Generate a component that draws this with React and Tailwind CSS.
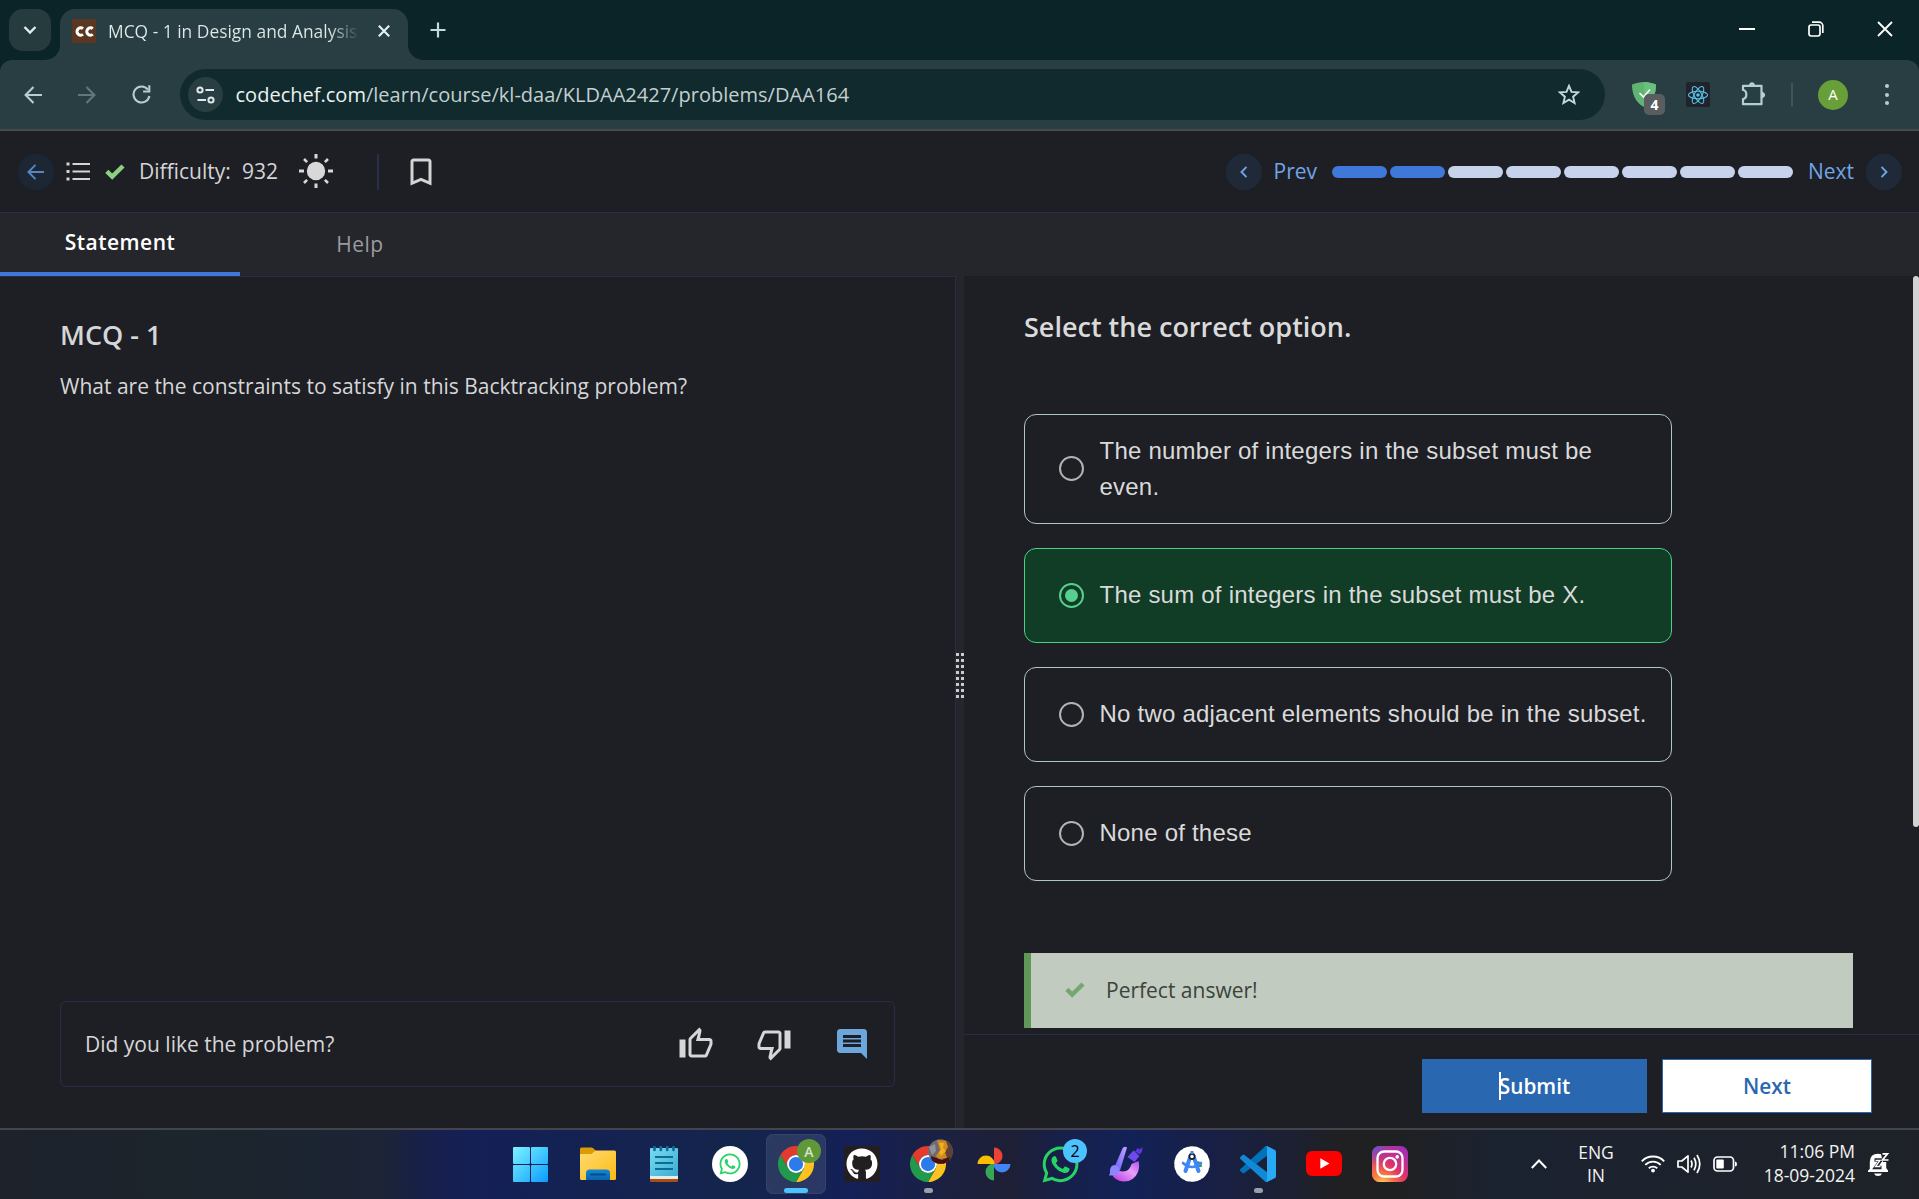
import { FaWhatsapp, FaGithub } from "react-icons/fa";

/* ---------- Browser chrome ---------- */

function TabCorner({ flip }) {
  return (
    <svg width="15" height="15" viewBox="0 0 15 15" className={flip ? "-scale-x-100" : ""}>
      <path d="M15 0A15 15 0 0 1 0 15H15Z" fill="#283e42" />
    </svg>
  );
}

function TitleBar() {
  return (
    <header className="flex h-[60px] items-end bg-[#0a2427]">
      <button className="mb-[9px] ml-[9px] flex size-[42px] items-center justify-center rounded-[14px] bg-[#253b3e]">
        <svg width="14" height="10" viewBox="0 0 14 10" fill="none" stroke="#e3ecec" strokeWidth="2.4">
          <path d="M1.5 2 7 7.5 12.5 2" />
        </svg>
      </button>
      <div className="ml-[-6px] flex items-end">
        <TabCorner />
        <div className="flex h-[51px] w-[348px] items-center rounded-t-[15px] bg-[#283e42] pb-[8px] pl-3">
          <span className="mt-px flex size-6 items-center justify-center bg-[#5b3722]">
            <svg width="20" height="11" viewBox="0 0 20 11" fill="none" stroke="#fff" strokeWidth="3">
              <path d="M9 2.6A3.7 3.7 0 1 0 9 8.4M18.8 2.6A3.7 3.7 0 1 0 18.8 8.4" />
            </svg>
          </span>
          <span className="ml-3 w-[252px] overflow-hidden whitespace-nowrap bg-linear-to-r from-[#e1eaea] from-88% to-[#283e42] bg-clip-text text-[17.4px] leading-6 text-transparent">
            MCQ - 1 in Design and Analysis
          </span>
          <svg className="ml-[18px]" width="12" height="12" viewBox="0 0 12 12" stroke="#e6eeee" strokeWidth="2.2">
            <path d="M.8.8 11.2 11.2M11.2.8.8 11.2" />
          </svg>
        </div>
        <TabCorner flip />
      </div>
      <svg className="mb-[22px] ml-[7px]" width="16" height="16" viewBox="0 0 16 16" stroke="#c3d9dc" strokeWidth="2.2">
        <path d="M8 .5v15M.5 8h15" />
      </svg>
      <div className="mb-[23px] ml-auto mr-[26px] flex items-center gap-[53px]">
        <svg width="16" height="16" viewBox="0 0 16 16">
          <path d="M0 8h16" stroke="#fff" strokeWidth="2" />
        </svg>
        <svg width="16" height="16" viewBox="0 0 16 16" fill="none" stroke="#fff" strokeWidth="1.7">
          <rect x="1" y="4" width="11" height="11" rx="2.2" />
          <path d="M4 1.2h7.2c2 0 3.6 1.6 3.6 3.6V12" />
        </svg>
        <svg width="16" height="16" viewBox="0 0 16 16" stroke="#fff" strokeWidth="1.8">
          <path d="M1 1l14 14M15 1 1 15" />
        </svg>
      </div>
    </header>
  );
}

function ArrowIcon({ flip, color }) {
  return (
    <svg className={flip ? "rotate-180" : ""} width="18" height="18" viewBox="0 0 18 18" fill="none" stroke={color} strokeWidth="2.1">
      <path d="M9.5 1 1.6 9l7.900 8M1.600 9H18" />
    </svg>
  );
}

function ReactGlyph() {
  return (
    <span className="flex h-[25px] w-6 items-center justify-center rounded-[2px] bg-[#20232a]">
      <svg width="22" height="22" viewBox="-11 -11 22 22" fill="none" stroke="#53c1e8" strokeWidth="1.1">
        <ellipse rx="9.6" ry="3.7" />
        <ellipse rx="9.6" ry="3.7" transform="rotate(60)" />
        <ellipse rx="9.6" ry="3.7" transform="rotate(120)" />
        <circle r="1.8" fill="#53c1e8" stroke="none" />
      </svg>
    </span>
  );
}

function AddressBar() {
  return (
    <div className="bg-[#0a2427]">
      <div className="flex h-[71px] items-center rounded-t-[12px] border-b-2 border-[#444a4d] bg-[#283e42] pl-6">
        <ArrowIcon color="#b4cfd3" />
        <span className="ml-9 flex">
          <ArrowIcon flip color="#61777a" />
        </span>
        <svg className="ml-9" width="19" height="19" viewBox="0 0 19 19" fill="none" stroke="#b4cfd3" strokeWidth="2.1">
          <path d="M15.9 4.6A8 8 0 1 0 17.4 11" />
          <path d="M17.3 .3v6.2h-6.2" />
        </svg>
        <div className="ml-[29px] flex h-[51px] w-[1425px] items-center rounded-full bg-[#112a2d] pl-2 pr-[25px]">
          <span className="flex size-[35px] items-center justify-center rounded-full bg-[#283e42]">
            <svg width="19" height="18" viewBox="0 0 19 18" fill="none" stroke="#dfe9ea" strokeWidth="2">
              <circle cx="4" cy="4" r="2.6" />
              <path d="M9.5 4H18M1.5 14H10" />
              <circle cx="15" cy="14" r="2.6" />
            </svg>
          </span>
          <span className="ml-[12.500px] whitespace-nowrap text-[20.04px] leading-8 text-[#c3cfd0]">
            <span className="text-[#eaf1f1]">codechef.com</span>/learn/course/kl-daa/KLDAA2427/problems/DAA164
          </span>
          <svg className="ml-auto" width="22" height="22" viewBox="0 0 22 22" fill="none" stroke="#c5d6d8" strokeWidth="1.9">
            <path d="m11 1.8 2.5 6.1 6.6.5-5 4.3 1.5 6.4L11 15.700l-5.600 3.400 1.500-6.400-5-4.300 6.600-.5z" />
          </svg>
        </div>
        <div className="relative ml-[27px] h-[25px] w-6">
          <svg width="24" height="25" viewBox="0 0 24 25">
            <path d="M12 0c4 0 8 1 12 2.500 0 10-3.500 18-12 22.500C3.500 20.500 0 12.500 0 2.500 4 1 8 0 12 0z" fill="#5fb471" />
            <path d="M12 0c4 0 8 1 12 2.500 0 10-3.500 18-12 22.500z" fill="#6abf7c" />
            <path d="m7.500 11 4 4L18 7.500" fill="none" stroke="#fff" strokeWidth="1.600" />
          </svg>
          <span className="absolute left-[12px] top-[12px] flex size-[21px] items-center justify-center rounded-[5px] bg-[#5a5d5f] text-[14px] font-bold leading-none text-white">
            4
          </span>
        </div>
        <span className="ml-[30px]">
          <ReactGlyph />
        </span>
        <svg className="mb-[3px] ml-[31px]" width="26" height="25" viewBox="0 0 26 25" fill="none" stroke="#b4cfd3" strokeWidth="2.2" strokeLinejoin="round">
          <path d="M2 9V4.800H20.500V23.200H2V18c4.400-.6 4.400-8.400 0-9z" />
          <path d="M8 4.500c0-4.500 6-4.500 6 0zM20.800 11c4.500 0 4.500 6 0 6z" fill="#b4cfd3" stroke="none" />
        </svg>
        <span className="ml-[24px] h-[23px] w-[2px] bg-[#3f5659]" />
        <span className="ml-[25px] flex size-[30px] items-center justify-center rounded-full bg-[#689f38] text-[15px] text-white">A</span>
        <span className="ml-[37px] flex flex-col gap-[4.500px]">
          <i className="size-1 rounded-full bg-[#b4cfd3]" />
          <i className="size-1 rounded-full bg-[#b4cfd3]" />
          <i className="size-1 rounded-full bg-[#b4cfd3]" />
        </span>
      </div>
    </div>
  );
}

/* ---------- Course page ---------- */

function Check({ color }) {
  return (
    <svg width="20" height="16" viewBox="0 0 20 16" fill="none" stroke={color} strokeWidth="4.400">
      <path d="M1.800 7.400 7.200 12.600 18 2" />
    </svg>
  );
}

function RoundNav({ next }) {
  return (
    <span className="flex size-9 items-center justify-center rounded-full bg-[#1f2937]">
      <svg width="8" height="12" viewBox="0 0 8 12" fill="none" stroke="#6fa5e8" strokeWidth="1.900" className={next ? "rotate-180" : ""}>
        <path d="M6.500.8 1.500 6l5 5.200" />
      </svg>
    </span>
  );
}

const steps = [true, true, false, false, false, false, false, false];

function ProblemHeader() {
  return (
    <div className="flex h-[82px] items-center border-b border-[#262e48] pl-[18px] pr-[17px] pt-px text-[#d4d4d4]">
      <span className="flex size-9 items-center justify-center rounded-full bg-[#1d2733]">
        <svg className="mr-px" width="17" height="16" viewBox="0 0 17 16" fill="none" stroke="#5587c2" strokeWidth="1.900">
          <path d="M8.500.8 1.400 8l7.100 7.200M1.400 8H17" />
        </svg>
      </span>
      <svg className="ml-3" width="24" height="20" viewBox="0 0 24 20" fill="none" stroke="#d4d4d4" strokeWidth="2">
        <path d="M6.500 2H24M6.500 9.500H24M6.500 17H24" />
        <path d="M.5 2h3M.5 9.500h3M.5 17h3" strokeWidth="3" />
      </svg>
      <span className="ml-[15px]">
        <Check color="#8ed081" />
      </span>
      <span className="ml-[14px] w-[103px] text-[21px]">Difficulty:</span>
      <span className="w-[37px] text-[21px]">932</span>
      <svg className="mb-[2px] ml-[20px]" width="34" height="34" viewBox="-17 -17 34 34" stroke="#d8d8d8" strokeWidth="3">
        <circle r="9.200" fill="#d8d8d8" stroke="none" />
        <path d="M0-17v4.500M0 17v-4.500M-17 0h5M17 0h-5" />
        <path d="M-12-12l3.100 3.100M12-12 8.900-8.900M-12 12l3.100-3.100M12 12 8.900 8.900" strokeWidth="2.600" />
      </svg>
      <span className="ml-[44px] h-9 w-[2px] bg-[#272f4a]" />
      <svg className="ml-[24px]" width="36" height="36" viewBox="0 0 24 24" fill="#d4d4d4">
        <path d="M17 3H7c-1.100 0-1.990.9-1.990 2L5 21l7-3 7 3V5c0-1.100-.9-2-2-2zm0 15-5-2.180L7 18V5h10v13z" />
      </svg>
      <div className="ml-auto flex items-center text-[21px] text-[#70a5e8]">
        <RoundNav />
        <span className="ml-[11.500px] w-[58.500px]">Prev</span>
        <div className="flex w-[461px] gap-[3px]">
          {steps.map((done, i) => (
            <span key={i} className={done ? "h-3 flex-1 rounded-full bg-[#4078da]" : "h-3 flex-1 rounded-full bg-[#c7d3eb]"} />
          ))}
        </div>
        <span className="ml-[15px] w-[58px]">Next</span>
        <RoundNav next />
      </div>
    </div>
  );
}

function StatementPanel() {
  return (
    <section className="flex w-[956px] flex-col">
      <nav className="flex h-16 border-b border-[#262e48] bg-[#25262b] text-[21px] tracking-[0.5px]">
        <span className="flex w-60 items-center justify-center border-b-4 border-[#4078da] font-semibold text-white">Statement</span>
        <span className="flex w-60 items-center justify-center text-[#9b9b9e]">Help</span>
      </nav>
      <div className="flex flex-1 flex-col border-r border-[#262e48] pb-[41px] pl-[60px] pr-[60px] pt-[40px] text-[#d6d6d8]">
        <h1 className="text-[27px] font-semibold leading-9">MCQ - 1</h1>
        <p className="mt-[17px] text-[21px] leading-8">What are the constraints to satisfy in this Backtracking problem?</p>
        <div className="mt-auto flex h-[86px] items-center rounded-[6px] border border-[#262e48] pl-6 pr-6">
          <span className="mt-[2px] text-[21px]">Did you like the problem?</span>
          <div className="ml-auto flex gap-[42px]">
            <svg width="36" height="36" viewBox="0 0 24 24" fill="#d6d6d8">
              <path d="M9 21h9c.83 0 1.540-.5 1.840-1.220l3.020-7.050c.09-.23.14-.47.14-.73v-2c0-1.100-.9-2-2-2h-6.310l.95-4.570.03-.32c0-.41-.17-.79-.44-1.060L14.170 1 7.580 7.590C7.220 7.950 7 8.450 7 9v10c0 1.100.9 2 2 2zM9 9l4.340-4.340L12 10h9v2l-3 7H9V9zM1 9h4v12H1z" />
            </svg>
            <svg width="36" height="36" viewBox="0 0 24 24" fill="#d6d6d8">
              <path d="M15 3H6c-.83 0-1.540.5-1.840 1.220l-3.020 7.050c-.09.23-.14.47-.14.73v2c0 1.100.9 2 2 2h6.310l-.95 4.570-.03.32c0 .41.17.79.44 1.060L9.830 23l6.590-6.590c.36-.36.58-.86.58-1.410V5c0-1.100-.9-2-2-2zm0 12-4.340 4.340L12 14H3v-2l3-7h9v10zm4-12h4v12h-4z" />
            </svg>
            <svg width="36" height="36" viewBox="0 0 24 24" fill="#6ca6dc">
              <path d="M21.990 4c0-1.100-.89-2-1.990-2H4c-1.100 0-2 .9-2 2v12c0 1.100.9 2 2 2h14l4 4-.01-18zM18 14H6v-2h12v2zm0-3H6V9h12v2zm0-3H6V6h12v2z" />
            </svg>
          </div>
        </div>
      </div>
    </section>
  );
}

function Splitter() {
  return (
    <div className="flex w-2 flex-col items-stretch bg-[#25262b] pt-[440px]">
      <div className="grid grid-cols-2 gap-x-[2px] gap-y-[3px]">
        {Array.from({ length: 16 }, (_, i) => (
          <i key={i} className="h-[3px] bg-[#cbcbcb]" />
        ))}
      </div>
    </div>
  );
}

function Option({ text, selected }) {
  return (
    <label
      className={
        selected
          ? "flex min-h-[95px] items-center rounded-[12px] border border-[#45d483] bg-[#113d27] pb-px pl-[33.500px] pr-5"
          : "flex min-h-[95px] items-center rounded-[12px] border border-[#b0c4cb] pb-[18px] pl-[33.500px] pr-5 pt-[17px]"
      }
    >
      <span
        className={
          selected
            ? "flex size-[25px] shrink-0 items-center justify-center rounded-full border-[2.500px] border-[#57d08f]"
            : "size-[25px] shrink-0 rounded-full border-[2.500px] border-[#b3b3b3]"
        }
      >
        {selected && <i className="size-[13px] rounded-full bg-[#57d08f]" />}
      </span>
      <span className="ml-4 font-['Liberation_Sans',Arial,sans-serif] text-[24px] leading-9 tracking-[0.22px] text-[#dadada]">{text}</span>
    </label>
  );
}

function AnswerPanel() {
  return (
    <section className="flex flex-1 flex-col">
      <div className="h-[63px] bg-[#25262b]" />
      <div className="flex h-[758px] justify-between overflow-hidden pl-[60px]">
        <div className="w-[829px]">
          <h2 className="pt-[33px] text-[27px] font-semibold leading-9 text-[#dadada]">Select the correct option.</h2>
          <div className="mt-[69px] flex w-[648px] flex-col gap-6">
            <div className="flex h-[110px] flex-col *:grow">
              <Option text="The number of integers in the subset must be even." />
            </div>
            <Option selected text="The sum of integers in the subset must be X." />
            <Option text="No two adjacent elements should be in the subset." />
            <Option text="None of these" />
          </div>
          <div className="mt-[72px] flex h-[75px] items-center border-l-[7px] border-[#5f9857] bg-[#c2cbbf] pl-[34px]">
            <span className="mb-[2px]">
              <Check color="#74a871" />
            </span>
            <span className="ml-[21px] text-[21px] text-[#3c423d]">Perfect answer!</span>
          </div>
        </div>
        <div className="h-[551px] w-[6px] rounded-[3px] bg-[#d3d3d3]" />
      </div>
      <div className="flex flex-1 justify-end gap-[15px] border-t border-[#262e48] pr-[47px] pt-6 text-[20.800px] font-semibold">
        <button className="relative flex h-[54px] w-[225px] items-center justify-center bg-[#2967b0] pt-[2px] text-white">
          Submit
          <i className="absolute left-[77px] top-[13px] h-7 w-[2px] bg-white" />
        </button>
        <button className="flex h-[54px] w-[210px] items-center justify-center border border-[#2967b0] bg-white pt-[2px] text-[#2967b0]">Next</button>
      </div>
    </section>
  );
}

/* ---------- Taskbar ---------- */

function ChromeIcon() {
  return (
    <svg width="36" height="36" viewBox="0 0 48 48">
      <path d="M3.220 12A24 24 0 0 1 44.780 12H24A12 12 0 0 0 13.610 30Z" fill="#e33b2e" />
      <path d="M44.780 12A24 24 0 0 1 24 48L34.390 30A12 12 0 0 0 24 12Z" fill="#fcc31e" />
      <path d="M3.220 12A24 24 0 0 0 24 48L34.390 30A12 12 0 0 1 13.610 30Z" fill="#219a4b" />
      <circle cx="24" cy="24" r="12" fill="#fff" />
      <circle cx="24" cy="24" r="9.500" fill="#2c7bea" />
    </svg>
  );
}

function WindowsIcon() {
  return (
    <svg width="35" height="35" viewBox="0 0 35 35">
      <defs>
        <linearGradient id="win" x1="0" y1="0" x2="35" y2="35" gradientUnits="userSpaceOnUse">
          <stop stopColor="#7df4ff" />
          <stop offset="1" stopColor="#0a9bff" />
        </linearGradient>
      </defs>
      <g fill="url(#win)">
        <rect width="17" height="17" rx="1" />
        <rect x="18" width="17" height="17" rx="1" />
        <rect y="18" width="17" height="17" rx="1" />
        <rect x="18" y="18" width="17" height="17" rx="1" />
      </g>
    </svg>
  );
}

function ExplorerIcon() {
  return (
    <svg width="36" height="34" viewBox="0 0 36 34">
      <defs>
        <linearGradient id="fold" x1="0" y1="0" x2="1" y2="1">
          <stop stopColor="#ffdb73" />
          <stop offset="1" stopColor="#fdbb12" />
        </linearGradient>
        <linearGradient id="foldb" x1="0" y1="0" x2="0" y2="1">
          <stop stopColor="#1588d8" />
          <stop offset="1" stopColor="#0864ae" />
        </linearGradient>
      </defs>
      <path d="M0 2Q0 .5 1.500.5H11Q12.500.5 13.500 1.500L16 4V10H0Z" fill="#dc9c00" />
      <path d="M0 7H11.500L15.500 3.500H34.500Q36 3.500 36 5V31.500Q36 33 34.500 33H1.500Q0 33 0 31.500Z" fill="url(#fold)" />
      <path d="M6 33V26Q6 22.500 9.500 22.500H26.500Q30 22.500 30 26V33Z" fill="url(#foldb)" />
      <path d="M11 27.500H25" stroke="#0b4a80" strokeWidth="1.800" strokeLinecap="round" />
    </svg>
  );
}

function NotepadIcon() {
  return (
    <svg width="28" height="36" viewBox="0 0 28 36">
      <defs>
        <linearGradient id="note" x1="0" y1="0" x2="1" y2="1">
          <stop stopColor="#79dcf0" />
          <stop offset="1" stopColor="#3badd3" />
        </linearGradient>
      </defs>
      <rect y="28" width="28" height="8" rx="1" fill="#a9500f" />
      <rect y="27" width="28" height="6" fill="#e9eaec" />
      <rect y="2" width="28" height="28" rx="1" fill="url(#note)" />
      <path d="M5 11H23M5 17H23M5 23H23" stroke="#0c6c96" strokeWidth="2" />
      <path d="M4.500 0V4M10.800 0V4M17.200 0V4M23.500 0V4" stroke="#0f6a94" strokeWidth="2.600" strokeLinecap="round" />
    </svg>
  );
}

function PhotosIcon() {
  return (
    <svg width="34" height="34" viewBox="0 0 34 34">
      <path d="M17 .5A8.500 8.500 0 0 1 17 17.500Z" fill="#ea4335" />
      <path d="M33.500 17A8.500 8.500 0 0 1 16.500 17Z" fill="#4285f4" />
      <path d="M17 33.500A8.500 8.500 0 0 1 17 16.500Z" fill="#34a853" />
      <path d="M.5 17A8.500 8.500 0 0 1 17.500 17Z" fill="#fbbc04" />
    </svg>
  );
}

function BrushIcon() {
  return (
    <svg width="34" height="36" viewBox="0 0 34 36">
      <defs>
        <linearGradient id="br1" x1="0" y1="1" x2="1" y2="0">
          <stop stopColor="#b52fe6" />
          <stop offset=".6" stopColor="#e9a0f8" />
          <stop offset="1" stopColor="#b04df0" />
        </linearGradient>
        <linearGradient id="br2" x1="1" y1="0" x2="0" y2="1">
          <stop stopColor="#c7a2ff" />
          <stop offset="1" stopColor="#6a5cff" />
        </linearGradient>
      </defs>
      <path d="M22.500 18Q20.500 25.500 14 25.500Q10 25.500 8 23L2 27Q6 35.500 15 35.500Q25 35.500 29 26Q31 20 29.500 15Z" fill="url(#br1)" />
      <path d="m18.500 11 6-6.500 6 5.500-5 6z" fill="#6f49ee" />
      <path d="m26 5.500 2.500-3.500 2 1.300L33.500 1l-.5 5-2.500 2.500z" fill="#5b35d8" />
      <path d="M13.500 2.500Q15-.5 18 1.500L11 24.500 5.500 21Z" fill="url(#br2)" />
      <path d="M5 19Q11 20 10.500 25Q9 30 0 29.500Q1.500 27.500 1 24.500Q1 20 5 19Z" fill="#8a86ff" />
    </svg>
  );
}

function AndroidStudioIcon() {
  return (
    <svg width="36" height="36" viewBox="-18 -18 36 36">
      <circle r="16" fill="#fff" />
      <circle r="16" fill="none" stroke="#fff" strokeWidth="3.600" strokeDasharray="3.400 2.180" strokeLinecap="round" />
      <path d="M3-2.500Q10-4 10 3H3Z" fill="#2d9c52" />
      <g fill="none" stroke="#4285f4" strokeLinecap="round">
        <path d="M-1.500-8-6.500 7M1.500-8 6.500 7" strokeWidth="4" />
        <path d="M-9-1Q0 7 9-1" strokeWidth="2.600" />
      </g>
      <circle cy="-7.500" r="2.600" fill="#fff" stroke="#202124" strokeWidth="1.700" />
      <path d="M0-13v3" stroke="#4285f4" strokeWidth="3" />
    </svg>
  );
}

function VsCodeIcon() {
  return (
    <svg width="36" height="36" viewBox="0 0 100 100">
      <path d="M96.460 10.800 75.860.87C73.470-.28 70.620.21 68.750 2.080L1.300 63.580C-.52 65.240-.51 68.090 1.300 69.750L6.800 74.750C8.300 76.100 10.500 76.200 12.100 75L93.400 13.400C96.100 11.300 100 13.300 100 16.700V16.400C100 14 98.600 11.900 96.500 10.800Z" fill="#0072b8" />
      <path d="M96.460 89.200 75.860 99.130C73.470 100.280 70.620 99.790 68.750 97.920L1.300 36.420C-.52 34.760-.51 31.910 1.300 30.250L6.800 25.250C8.300 23.900 10.500 23.800 12.100 25L93.400 86.600C96.100 88.700 100 86.700 100 83.300V83.600C100 86 98.600 88.100 96.500 89.200Z" fill="#1289d6" />
      <path d="M75.860 99.130C73.470 100.280 70.620 99.790 68.750 97.920 71.050 100.220 75 98.600 75 95.330V4.670C75 1.400 71.050-.22 68.750 2.080 70.620.21 73.470-.28 75.860.87L96.460 10.780C98.600 11.800 100 14 100 16.400V83.600C100 86 98.600 88.200 96.460 89.200Z" fill="#29a8f5" />
    </svg>
  );
}

function InstagramIcon() {
  return (
    <svg width="36" height="36" viewBox="0 0 36 36">
      <defs>
        <linearGradient id="ig1" x1=".9" y1=".1" x2=".2" y2="1">
          <stop stopColor="#a12fb5" />
          <stop offset=".5" stopColor="#e0306c" />
          <stop offset="1" stopColor="#fb8c3a" />
        </linearGradient>
        <radialGradient id="ig2" cx=".3" cy="1.050" r=".6">
          <stop stopColor="#ffd963" />
          <stop offset=".5" stopColor="#fc7a3a" stopOpacity=".7" />
          <stop offset="1" stopColor="#e0306c" stopOpacity="0" />
        </radialGradient>
        <radialGradient id="ig3" cx="0" cy="0" r=".6">
          <stop stopColor="#4a62d8" />
          <stop offset="1" stopColor="#8a3ac8" stopOpacity="0" />
        </radialGradient>
      </defs>
      <rect width="36" height="36" rx="7.500" fill="url(#ig1)" />
      <rect width="36" height="36" rx="7.500" fill="url(#ig2)" />
      <rect width="36" height="36" rx="7.500" fill="url(#ig3)" />
      <g fill="none" stroke="#fff" strokeWidth="2.300">
        <rect x="5.500" y="5.500" width="25" height="25" rx="6.500" />
        <circle cx="18" cy="18" r="6.200" />
      </g>
      <circle cx="25.200" cy="10.900" r="1.800" fill="#fff" />
    </svg>
  );
}

function Slot({ children, mark }) {
  return (
    <div className="relative flex h-full w-[66px] items-center justify-center pb-px">
      {children}
      {mark && <i className="absolute bottom-[6px] left-[29px] h-[5px] w-[9px] rounded-full bg-[#9a9dab]" />}
    </div>
  );
}

function TaskbarApps() {
  return (
    <div className="flex h-full">
      <Slot>
        <span className="mr-[3px]"><WindowsIcon /></span>
      </Slot>
      <Slot><ExplorerIcon /></Slot>
      <Slot><NotepadIcon /></Slot>
      <Slot>
        <span className="flex size-9 items-center justify-center rounded-full bg-white">
          <FaWhatsapp size={24} color="#25d366" />
        </span>
      </Slot>
      <Slot>
        <span className="absolute inset-x-[3px] bottom-[5px] top-[4px] rounded-[7px] border border-white/5 bg-white/10" />
        <span className="relative"><ChromeIcon /></span>
        <span className="absolute left-[34px] top-[9px] flex size-6 items-center justify-center rounded-full bg-[#5f9838] text-[14px] font-semibold text-[#d5e4c8]">A</span>
        <i className="absolute bottom-[6px] left-[21px] h-[5px] w-6 rounded-full bg-[#4cc2ff]" />
      </Slot>
      <Slot>
        <span className="flex size-9 items-center justify-center bg-[#231f20]">
          <FaGithub size={32} color="#fff" />
        </span>
      </Slot>
      <Slot mark>
        <ChromeIcon />
        <svg className="absolute left-[33px] top-[9px]" width="25" height="25" viewBox="0 0 25 25">
          <defs>
            <clipPath id="av"><circle cx="12.500" cy="12.500" r="12.300" /></clipPath>
          </defs>
          <g clipPath="url(#av)">
            <rect width="25" height="25" fill="#6f6a70" />
            <path d="M17 0H25V25H15Z" fill="#5e4238" />
            <path d="M9 1 18 2 20 8 17 13 19 19 11 20 8 17 12 11Z" fill="#d18a1c" />
            <path d="M11 4 16 4 15 9 18 12 13 17 11 14 13 10Z" fill="#f0b01e" />
            <path d="M3 17 14 21 22 18 20 25H4Z" fill="#4a0f10" />
            <path d="M1 8 7 5 8 12 4 16Z" fill="#8f939c" />
          </g>
        </svg>
      </Slot>
      <Slot><PhotosIcon /></Slot>
      <Slot>
        <FaWhatsapp size={41} color="#25d366" />
        <span className="absolute left-[36px] top-[9px] flex size-6 items-center justify-center rounded-full bg-[#4cc2ff] text-[16px] text-black">2</span>
      </Slot>
      <Slot><BrushIcon /></Slot>
      <Slot><AndroidStudioIcon /></Slot>
      <Slot mark><VsCodeIcon /></Slot>
      <Slot>
        <svg width="36" height="26" viewBox="0 0 36 26">
          <rect width="36" height="25" rx="6" fill="#ff0000" />
          <path d="M14.300 7.200 23.500 12.500 14.300 17.800Z" fill="#fff" />
        </svg>
      </Slot>
      <Slot><InstagramIcon /></Slot>
    </div>
  );
}

function Tray() {
  return (
    <div className="ml-auto flex h-full items-center pb-[2px] pr-[29px] text-[17.500px] leading-[23px] text-[#f3f3f3]">
      <svg width="16" height="10" viewBox="0 0 16 10" fill="none" stroke="#fff" strokeWidth="2">
        <path d="M.8 9 8 1.500 15.200 9" />
      </svg>
      <div className="ml-[31px] w-9 text-center">
        ENG<br />IN
      </div>
      <svg className="ml-[27px]" width="24" height="18" viewBox="0 0 24 18" fill="none" stroke="#fff" strokeWidth="1.900">
        <path d="M.8 6.300A15.500 15.500 0 0 1 23.200 6.300M4.300 9.900A10.800 10.800 0 0 1 19.700 9.900M7.800 13.300A6 6 0 0 1 16.200 13.300" />
        <circle cx="12" cy="15.600" r="1.900" fill="#fff" stroke="none" />
      </svg>
      <svg className="ml-3" width="24" height="20" viewBox="0 0 24 20" fill="none" stroke="#fff" strokeWidth="1.700">
        <path d="M1 7v6h3.800L11 18.200V1.800L4.800 7Z" strokeLinejoin="round" />
        <path d="M14 6.500Q16 10 14 13.500M17 3.800Q20.600 10 17 16.200M20 1Q25.600 10 20 19" />
      </svg>
      <svg className="ml-3" width="24" height="16" viewBox="0 0 24 16">
        <rect x="1" y="1" width="19.500" height="14" rx="3.500" fill="none" stroke="#fff" strokeWidth="1.700" />
        <rect x="3.300" y="3.500" width="7.500" height="9" rx="1" fill="#fff" />
        <path d="M22 5.500Q24 5.500 24 8T22 10.500Z" fill="#fff" />
      </svg>
      <div className="ml-5 w-[98px] whitespace-nowrap pb-px text-right leading-6">
        11:06 PM<br />18-09-2024
      </div>
      <svg className="ml-[13px]" width="22" height="24" viewBox="0 0 22 24">
        <path d="M1.800 17V10Q2 1.800 10 1.800Q18 1.800 18.200 10V16L20 18.500V20H0V18.500Z" fill="#fff" />
        <path d="M6 21.500h8Q13 24 10 24T6 21.500Z" fill="#fff" />
        <path d="M12.500 0H22V10H15Z" fill="#1d2229" />
        <g fill="none">
          <path d="M6.500 8h6.500l-5.500 7.500h6" stroke="#1d2229" strokeWidth="3.400" />
          <path d="M7.500 8.500h4.500l-4.500 6h5" stroke="#fff" strokeWidth="1.300" />
          <path d="M14.500 1.800h5l-5 6.200h6" stroke="#fff" strokeWidth="1.700" />
        </g>
      </svg>
    </div>
  );
}

function Taskbar() {
  return (
    <footer className="flex h-[71px] border-t-2 border-[#42454b] bg-[linear-gradient(90deg,#1d222b_0px,#1c252d_230px,#1c2436_380px,#161f4f_440px,#142056_480px,#14254c_740px,#142057_850px,#1c2140_950px,#1e1f35_1010px,#182049_1060px,#122257_1130px,#171f48_1200px,#1c2031_1290px,#202022_1340px,#1f2022_1400px,#1b2230_1500px,#1e2228_1919px)] pl-[499px]">
      <TaskbarApps />
      <Tray />
    </footer>
  );
}

export default function App() {
  return (
    <div className="flex h-[1199px] w-[1919px] flex-col overflow-hidden bg-[#1e1f24] font-['Open_Sans','Noto_Sans',sans-serif]">
      <TitleBar />
      <AddressBar />
      <ProblemHeader />
      <main className="flex min-h-0 flex-1">
        <StatementPanel />
        <Splitter />
        <AnswerPanel />
      </main>
      <Taskbar />
    </div>
  );
}
